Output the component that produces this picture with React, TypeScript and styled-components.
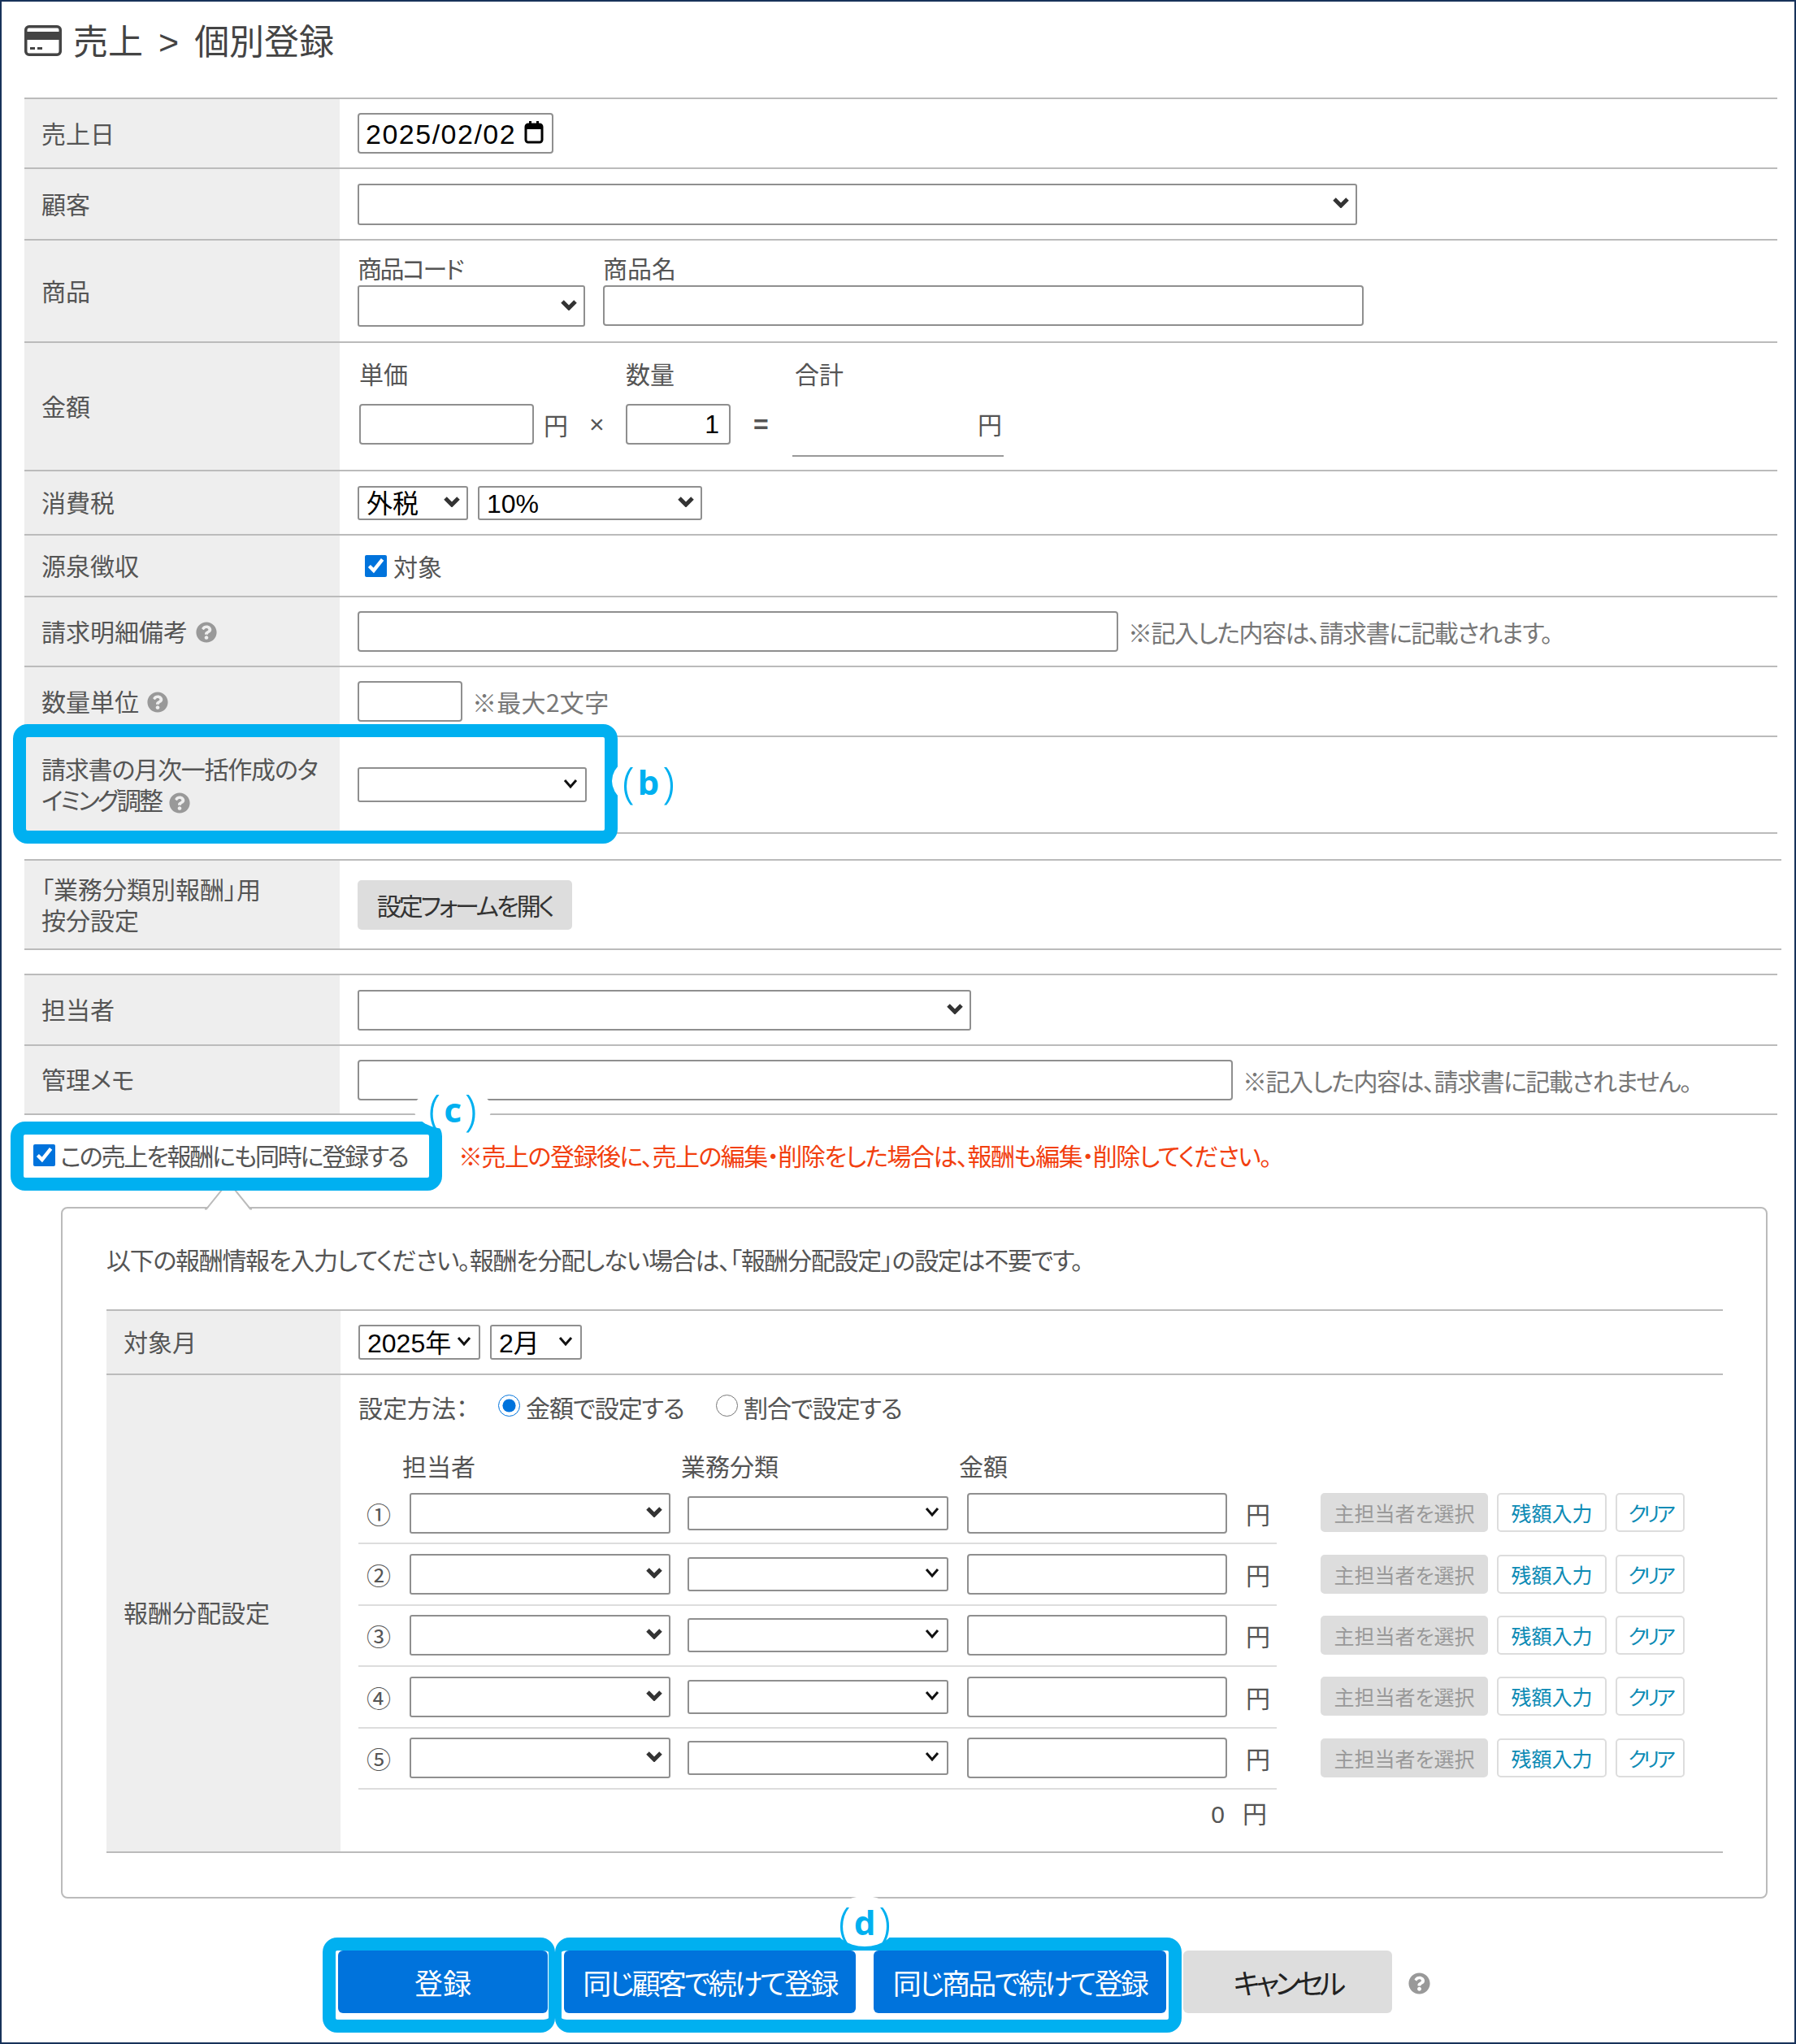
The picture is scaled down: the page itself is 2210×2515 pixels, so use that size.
import React from 'react';
import styled, { createGlobalStyle } from 'styled-components';
import { FaQuestionCircle } from 'react-icons/fa';

const Global = createGlobalStyle`
  html, body { margin: 0; padding: 0; background: #fff; }
  * { box-sizing: border-box; }
`;
const JP = `"Noto Sans CJK JP", "Noto Sans", sans-serif`;
const CONTROL = `"Liberation Sans", "Noto Sans CJK JP", sans-serif`;
const BLUE = '#00b0f0';

const Page = styled.div`
  position: relative; width: 2210px; height: 2515px; overflow: hidden;
  border: 2px solid #17325a; padding: 0 21px 0 28px;
  font-family: ${JP}; font-feature-settings: "palt"; font-size: 30px; line-height: 38px; color: #555;
`;
const Title = styled.h1`
  display: flex; align-items: center; gap: 14px; height: 118px; margin: 0; padding: 0 0 22px;
  font-size: 43px; font-weight: 400; color: #444; line-height: 50px;
`;
const Crumb = styled.span`
  margin: 0 19px; font-family: ${CONTROL};
`;
const Table = styled.div<{ $gap?: number; $wide?: boolean }>`
  border-top: 2px solid #bbb;
  margin-top: ${p => p.$gap ?? 0}px;
  margin-right: ${p => (p.$wide ? -5 : 0)}px;
`;
const Row = styled.div<{ $h: number }>`
  display: grid; grid-template-columns: 388px 1fr; height: ${p => p.$h}px; border-bottom: 2px solid #bbb;
`;
const Label = styled.div`
  display: flex; align-items: center; background: #eee; padding: 0 0 3px 21px;
`;
const LabelText = styled.div`
  white-space: nowrap;
`;
const LabelLine = styled.span<{ $squeeze: number }>`
  letter-spacing: ${p => p.$squeeze}px;
`;
const Field = styled.div`
  display: flex; align-items: center; gap: 12px; padding-left: 22px; min-width: 0;
`;
const TopField = styled(Field)<{ $flush?: boolean }>`
  align-items: flex-start; gap: ${p => (p.$flush ? 0 : 22)}px; padding-top: ${p => (p.$flush ? 26 : 16)}px;
`;
const Stack = styled.div`
  display: flex; flex-direction: column;
`;
const Head = styled.div<{ $squeeze?: number }>`
  height: 39px; line-height: 34px; white-space: nowrap; letter-spacing: ${p => p.$squeeze ?? 0}px;
`;
const AmountCol = styled.div<{ $w: number }>`
  width: ${p => p.$w}px; display: flex; flex-direction: column;
`;
const AmountHead = styled.div<{ $pad: number }>`
  height: 49px; line-height: 22px; padding-left: ${p => p.$pad}px;
`;
const AmountLine = styled.div`
  display: flex; align-items: center; height: 50px; white-space: nowrap;
`;
const Unit = styled.span`
  margin-left: 12px; color: #555;
`;
const Op = styled.span<{ $x: number; $bold?: boolean }>`
  margin-left: ${p => p.$x}px; color: #555; font-family: ${CONTROL}; font-size: 32px; font-weight: ${p => (p.$bold ? 700 : 400)};
`;
const TotalBox = styled.div`
  display: flex; justify-content: flex-end; align-items: center; width: 260px; height: 65px; padding: 0 2px 15px 0;
  border-bottom: 2px solid #999;
`;
const TextInput = styled.input<{ $w: number; $h?: number; $indent?: number }>`
  display: block; width: ${p => p.$w}px; height: ${p => p.$h ?? 50}px; margin-left: ${p => p.$indent ?? 0}px; padding: 0 12px; background: #fff;
  border: 2px solid #8f8f8f; border-radius: 4px; outline: none;
  font-family: ${CONTROL}; font-size: 32px; color: #000;
`;
const NumInput = styled(TextInput)`
  text-align: right;
`;
const DateWrap = styled.div`
  position: relative; width: 241px; height: 50px;
`;
const DateInput = styled(TextInput)`
  padding: 2px 0 0 8px; letter-spacing: 1.5px; font-size: 34px;
`;
const CalIcon = styled.svg`
  position: absolute; right: 12px; top: 10px; width: 24px; height: 28px;
`;
const SelectWrap = styled.div<{ $w: number; $h: number }>`
  position: relative; flex: none; width: ${p => p.$w}px; height: ${p => p.$h}px;
`;
const NativeSelect = styled.select`
  appearance: none; display: block; width: 100%; height: 100%; padding: 2px 30px 0 9px; background: #fff;
  border: 2px solid #8f8f8f; border-radius: 3px; outline: none;
  font-family: ${CONTROL}; font-size: 32px; color: #000;
`;
const Chevron = styled.svg<{ $thin?: boolean }>`
  position: absolute; right: ${p => (p.$thin ? 10 : 9)}px; top: 50%; width: ${p => (p.$thin ? 20 : 22)}px; height: 14px; margin-top: -9px; pointer-events: none;
`;
const Hint = styled.span<{ $squeeze?: number }>`
  color: #777; white-space: nowrap; letter-spacing: ${p => p.$squeeze ?? -1.5}px;
`;
const CheckLabel = styled.label`
  display: flex; align-items: center; gap: 8px; padding-left: 9px;
`;
const Check = styled.input`
  width: 27px; height: 27px; margin: 0; accent-color: #0073dc; flex: none;
`;
const GrayButton = styled.button`
  height: 61px; width: 264px; padding: 0; border: 0; border-radius: 5px; background: #ddd;
  font-family: ${JP}; font-feature-settings: "palt"; font-size: 30px; letter-spacing: -3px; color: #333;
`;
const RegisterRow = styled.div`
  display: flex; height: 113px; padding: 29px 0 0 11px;
`;
const RegisterLabel = styled.label`
  display: flex; align-items: center; gap: 6px; height: 40px; width: 523px; letter-spacing: -2.2px; white-space: nowrap;
`;
const Warning = styled.span`
  line-height: 40px; color: #f2400f; white-space: nowrap; font-size: 30px; letter-spacing: -1.5px;
`;
const Panel = styled.div`
  position: relative; width: 2100px; height: 851px; margin-left: 45px; padding: 42px 53px 0 54px;
  border: 2px solid #bbb; border-radius: 8px;
`;
const Notch = styled.svg`
  position: absolute; left: 175px; top: -35px; width: 58px; height: 37px;
`;
const Intro = styled.p`
  margin: 0 0 42px; line-height: 40px; white-space: nowrap; letter-spacing: -1.3px;
`;
const InnerRow = styled.div<{ $h?: number }>`
  display: grid; grid-template-columns: 288px 1fr; border-bottom: 2px solid #bbb;
  height: ${p => (p.$h ? `${p.$h}px` : 'auto')};
`;
const Inner = styled.div`
  border-top: 2px solid #bbb;
`;
const InnerField = styled.div`
  display: flex; align-items: center; gap: 12px; padding-left: 22px;
`;
const AllocCell = styled.div`
  padding-left: 22px;
`;
const Method = styled.div`
  display: flex; align-items: center; height: 48px; margin-top: 15px; margin-bottom: 26px; white-space: nowrap;
`;
const MethodTitle = styled.span`
  width: 172px; letter-spacing: 0;
`;
const Radio = styled.input`
  width: 27px; height: 27px; margin: 0 7px 4px 0; accent-color: #0073dc; flex: none;
`;
const RadioText = styled.span<{ $w?: number }>`
  width: ${p => (p.$w ? `${p.$w}px` : 'auto')}; letter-spacing: -1px;
`;
const ColumnHeads = styled.div`
  display: flex; height: 44px; align-items: center; padding-left: 54px;
`;
const ColumnHead = styled.span<{ $w: number }>`
  width: ${p => p.$w}px;
`;
const AllocRow = styled.div`
  display: flex; align-items: center;
`;
const AllocLine = styled.div`
  display: flex; align-items: center; width: 1130px; height: 75.4px; border-bottom: 2px solid #ddd;
`;
const Num = styled.span`
  width: 63px; padding-left: 10px; font-size: 30px; color: #555;
`;
const Spacer = styled.span<{ $w: number }>`
  width: ${p => p.$w}px; flex: none;
`;
const Actions = styled.div`
  display: flex; gap: 11px; margin-left: 54px; margin-top: -3px;
`;
const SmallGray = styled.button`
  width: 206px; height: 48px; padding: 0; border: 2px solid #ddd; border-radius: 5px; background: #ddd;
  font-family: ${JP}; font-feature-settings: "palt"; font-size: 25px; color: #999;
`;
const SmallLink = styled.button<{ $w: number; $squeeze?: number }>`
  width: ${p => p.$w}px; height: 48px; padding: 0; border: 2px solid #ddd; border-radius: 5px; background: #fff;
  font-family: ${JP}; font-feature-settings: "palt"; font-size: 25px; color: #0d8bb5;
  letter-spacing: ${p => p.$squeeze ?? 0}px;
`;
const TotalLine = styled.div`
  display: flex; justify-content: flex-end; align-items: center; width: 1130px; height: 42px; margin-top: 10px; margin-bottom: 24px;
  padding-right: 12px; gap: 22px; font-family: ${CONTROL}; font-size: 30px;
`;
const Footer = styled.div`
  display: flex; align-items: center; height: 77px; margin-top: 64px; padding-left: 386px;
`;
const BigButton = styled.button<{ $w: number; $gap: number; $gray?: boolean; $squeeze?: number }>`
  width: ${p => p.$w}px; height: 77px; margin-right: ${p => p.$gap}px; padding: 0; border: 0; border-radius: 6px;
  background: ${p => (p.$gray ? '#ddd' : '#0073dc')}; color: ${p => (p.$gray ? '#222' : '#fff')};
  font-family: ${JP}; font-feature-settings: "palt"; font-size: 35px; letter-spacing: ${p => p.$squeeze ?? 0}px;
`;
const HelpMark = styled(FaQuestionCircle)<{ $size?: number }>`
  flex: none; display: inline-block; vertical-align: -3px; width: ${p => p.$size ?? 26}px; height: ${p => p.$size ?? 26}px; color: #999; margin-left: 10px; position: relative; top: 2px;
`;
const Outline = styled.div`
  position: absolute; border: 16px solid ${BLUE}; border-radius: 18px; pointer-events: none;
`;
const OutlineB = styled(Outline)`
  left: 14px; top: 889px; width: 744px; height: 147px;
`;
const OutlineC = styled(Outline)`
  left: 11px; top: 1378px; width: 531px; height: 85px;
`;
const OutlineD1 = styled(Outline)`
  left: 395px; top: 2382px; width: 286px; height: 117px; border-right-width: 8px;
`;
const OutlineD2 = styled(Outline)`
  left: 681px; top: 2382px; width: 771px; height: 117px; border-left-width: 8px;
`;
const Tag = styled.div`
  position: absolute; display: flex; align-items: center; justify-content: center; background: #fff; border-radius: 50%;
  color: ${BLUE}; font-family: "Noto Sans", "Liberation Sans", sans-serif; font-size: 54px; line-height: 1; font-weight: 300; font-feature-settings: normal;
  & b { font-weight: 700; font-size: 42px; margin: 2px 4px 0; }
`;
const TagB = styled(Tag)`
  left: 751px; top: 926px; width: 90px; height: 66px;
`;
const TagC = styled(Tag)`
  left: 507px; top: 1336px; width: 96px; height: 52px;
`;
const TagD = styled(Tag)`
  left: 1022px; top: 2331px; width: 80px; height: 62px;
`;

const Arrow: React.FC<{ thin?: boolean }> = ({ thin }) => (
  <Chevron $thin={thin} viewBox={thin ? '0 0 20 14' : '0 0 22 14'}>
    {thin ? (
      <path d="M3 3 L10 11 L17 3" fill="none" stroke="#111" strokeWidth={3} />
    ) : (
      <path d="M3 3 L11 11 L19 3" fill="none" stroke="#333" strokeWidth={5} />
    )}
  </Chevron>
);
const Sel: React.FC<{ w: number; h: number; value?: string; thin?: boolean }> = ({ w, h, value, thin }) => (
  <SelectWrap $w={w} $h={h}>
    <NativeSelect defaultValue={value ?? ''}>
      <option value={value ?? ''}>{value ?? ''}</option>
    </NativeSelect>
    <Arrow thin={thin} />
  </SelectWrap>
);

const rows = ['①', '②', '③', '④', '⑤'];

export default function App() {
  return (
    <Page>
      <Global />
      <Title>
        <svg width="46" height="38" viewBox="0 0 46 38">
          <rect x="1.75" y="1.75" width="42.5" height="34.5" rx="4" fill="#fff" stroke="#444" strokeWidth="3.5" />
          <rect x="2" y="8" width="42" height="10" fill="#444" />
          <rect x="7" y="27" width="6" height="3" fill="#444" />
          <rect x="16" y="27" width="6" height="3" fill="#444" />
        </svg>
        <span>売上<Crumb>&gt;</Crumb>個別登録</span>
      </Title>
      <Table>
        <Row $h={86}>
          <Label>売上日</Label>
          <Field>
            <DateWrap>
              <DateInput $w={241} readOnly defaultValue="2025/02/02" />
              <CalIcon viewBox="0 0 24 28">
                <path d="M6 0h3v4H6zM15 0h3v4h-3z" fill="#000" />
                <rect x="2" y="4" width="20" height="22" rx="3" fill="#fff" stroke="#000" strokeWidth="3" />
                <rect x="2" y="4" width="20" height="6" fill="#000" />
              </CalIcon>
            </DateWrap>
          </Field>
        </Row>
        <Row $h={88}>
          <Label>顧客</Label>
          <Field><Sel w={1230} h={51} /></Field>
        </Row>
        <Row $h={126}>
          <Label>商品</Label>
          <TopField>
            <Stack><Head $squeeze={-2.6}>商品コード</Head><Sel w={280} h={51} /></Stack>
            <Stack><Head>商品名</Head><TextInput $w={936} /></Stack>
          </TopField>
        </Row>
        <Row $h={158}>
          <Label>金額</Label>
          <TopField $flush>
            <AmountCol $w={330}>
              <AmountHead $pad={2}>単価</AmountHead>
              <AmountLine>
                <TextInput $indent={2} $w={215} />
                <Unit>円</Unit>
                <Op $x={26}>×</Op>
              </AmountLine>
            </AmountCol>
            <AmountCol $w={205}>
              <AmountHead $pad={0}>数量</AmountHead>
              <AmountLine>
                <NumInput $w={129} defaultValue="1" />
                <Op $x={28} $bold>=</Op>
              </AmountLine>
            </AmountCol>
            <AmountCol $w={260}>
              <AmountHead $pad={3}>合計</AmountHead>
              <TotalBox>円</TotalBox>
            </AmountCol>
          </TopField>
        </Row>
        <Row $h={79}>
          <Label>消費税</Label>
          <Field>
            <Sel w={136} h={42} value="外税" />
            <Sel w={276} h={42} value="10%" />
          </Field>
        </Row>
        <Row $h={76}>
          <Label>源泉徴収</Label>
          <Field><CheckLabel><Check type="checkbox" defaultChecked />対象</CheckLabel></Field>
        </Row>
        <Row $h={86}>
          <Label>請求明細備考<HelpMark /></Label>
          <Field><TextInput $w={936} /><Hint>※記入した内容は、請求書に記載されます。</Hint></Field>
        </Row>
        <Row $h={86}>
          <Label>数量単位<HelpMark /></Label>
          <Field><TextInput $w={129} /><Hint $squeeze={0.3}>※最大2文字</Hint></Field>
        </Row>
        <Row $h={119}>
          <Label>
            <LabelText>
              <LabelLine $squeeze={-1.2}>請求書の月次一括作成のタ</LabelLine><br />
              <LabelLine $squeeze={-3}>イミング調整</LabelLine><HelpMark />
            </LabelText>
          </Label>
          <Field><Sel w={282} h={43} thin /></Field>
        </Row>
      </Table>
      <Table $gap={31} $wide>
        <Row $h={110}>
          <Label><LabelText>「業務分類別報酬」用<br />按分設定</LabelText></Label>
          <Field><GrayButton>設定フォームを開く</GrayButton></Field>
        </Row>
      </Table>
      <Table $gap={29}>
        <Row $h={87}>
          <Label>担当者</Label>
          <Field><Sel w={755} h={50} /></Field>
        </Row>
        <Row $h={85}>
          <Label>管理メモ</Label>
          <Field><TextInput $w={1077} /><Hint>※記入した内容は、請求書に記載されません。</Hint></Field>
        </Row>
      </Table>
      <RegisterRow>
        <RegisterLabel><Check type="checkbox" defaultChecked />この売上を報酬にも同時に登録する</RegisterLabel>
        <Warning>※売上の登録後に、売上の編集・削除をした場合は、報酬も編集・削除してください。</Warning>
      </RegisterRow>
      <Panel>
        <Notch viewBox="0 0 58 37">
          <path d="M2 37 L29 2 L56 37 Z" fill="#fff" />
          <path d="M0 35.5 H2 L29 2 L56 35.5 H58" fill="none" stroke="#bbb" strokeWidth="2" />
        </Notch>
        <Intro>以下の報酬情報を入力してください。報酬を分配しない場合は、「報酬分配設定」の設定は不要です。</Intro>
        <Inner>
          <InnerRow $h={79}>
            <Label>対象月</Label>
            <InnerField>
              <Sel w={150} h={43} value="2025年" thin />
              <Sel w={113} h={43} value="2月" thin />
            </InnerField>
          </InnerRow>
          <InnerRow>
            <Label>報酬分配設定</Label>
            <AllocCell>
              <Method>
                <MethodTitle>設定方法：</MethodTitle>
                <Radio type="radio" name="method" defaultChecked />
                <RadioText $w={234}>金額で設定する</RadioText>
                <Radio type="radio" name="method" />
                <RadioText>割合で設定する</RadioText>
              </Method>
              <ColumnHeads>
                <ColumnHead $w={343}>担当者</ColumnHead>
                <ColumnHead $w={342}>業務分類</ColumnHead>
                <ColumnHead $w={100}>金額</ColumnHead>
              </ColumnHeads>
              {rows.map(n => (
                <AllocRow key={n}>
                  <AllocLine>
                    <Num>{n}</Num>
                    <Sel w={321} h={50} />
                    <Spacer $w={21} />
                    <Sel w={321} h={42} thin />
                    <Spacer $w={23} />
                    <TextInput $w={320} />
                    <Spacer $w={23} />
                    <span>円</span>
                  </AllocLine>
                  <Actions>
                    <SmallGray>主担当者を選択</SmallGray>
                    <SmallLink $w={135}>残額入力</SmallLink>
                    <SmallLink $w={85} $squeeze={-4}>クリア</SmallLink>
                  </Actions>
                </AllocRow>
              ))}
              <TotalLine><span>0</span><span>円</span></TotalLine>
            </AllocCell>
          </InnerRow>
        </Inner>
      </Panel>
      <Footer>
        <BigButton $w={258} $gap={20}>登録</BigButton>
        <BigButton $w={359} $gap={22} $squeeze={-2.7}>同じ顧客で続けて登録</BigButton>
        <BigButton $w={360} $gap={21} $squeeze={-2.7}>同じ商品で続けて登録</BigButton>
        <BigButton $w={257} $gap={10} $gray $squeeze={-5}>キャンセル</BigButton>
        <HelpMark $size={27} />
      </Footer>
      <OutlineB />
      <OutlineC />
      <OutlineD1 />
      <OutlineD2 />
      <TagB>(<b>b</b>)</TagB>
      <TagC>(<b>c</b>)</TagC>
      <TagD>(<b>d</b>)</TagD>
    </Page>
  );
}
